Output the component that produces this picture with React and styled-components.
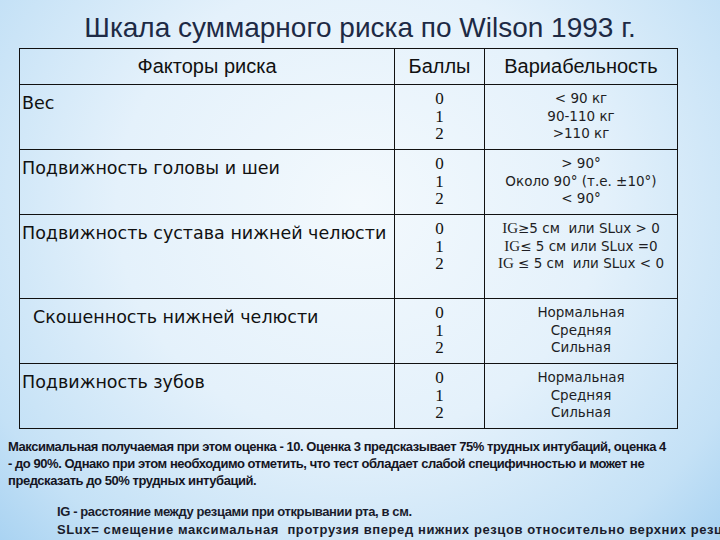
import React from "react";
import styled, { createGlobalStyle } from "styled-components";

const GlobalStyle = createGlobalStyle`
  html, body {
    margin: 0;
    padding: 0;
  }
  body {
    width: 720px;
    height: 540px;
    overflow: hidden;
  }
`;

const Slide = styled.div`
  width: 720px;
  height: 540px;
  overflow: hidden;
  background: radial-gradient(
    ellipse 75% 95% at 50% 38%,
    #f3f9fd 0%,
    #e4f1fb 45%,
    #c4e1f6 78%,
    #9ecdf0 100%
  );
`;

const Title = styled.h1`
  margin: 0;
  padding-top: 13px;
  height: 35px;
  line-height: 30px;
  text-align: center;
  font-family: "Liberation Sans", Arial, sans-serif;
  font-weight: normal;
  font-size: 28px;
  color: #1d2a45;
  white-space: nowrap;
`;

const Table = styled.table`
  margin-left: 19px;
  width: 658px;
  border-collapse: collapse;
  table-layout: fixed;
  color: #111;
`;

const Th = styled.th`
  height: 35px;
  padding: 0;
  border: 1px solid #111;
  font-family: "Liberation Sans", Arial, sans-serif;
  font-weight: normal;
  font-size: 20px;
  text-align: center;
  vertical-align: middle;
`;

const FactorCell = styled.td`
  height: ${(p) => p.$h}px;
  padding: 8px 0 0 ${(p) => (p.$indent ? 13 : 2)}px;
  box-sizing: border-box;
  border: 1px solid #111;
  vertical-align: top;
  font-family: "DejaVu Sans", Verdana, sans-serif;
  font-size: 17.5px;
  line-height: 20px;
  white-space: nowrap;
`;

const ListCell = styled.td`
  padding: 5px 0 0;
  border: 1px solid #111;
  vertical-align: top;
  text-align: center;
  font-family: ${(p) =>
    p.$serif
      ? `"Liberation Serif", "Times New Roman", serif`
      : `"DejaVu Sans", Verdana, sans-serif`};
  font-size: ${(p) => (p.$serif ? 17 : 13.5)}px;
  line-height: 17.5px;
  color: ${(p) => (p.$serif ? "#111" : "#1e1e24")};
  white-space: nowrap;
`;

const Serif = styled.span`
  font-family: "Liberation Serif", "Times New Roman", serif;
  font-size: 15px;
`;

const Note = styled.p`
  margin: 9px 0 0 8px;
  font-family: "Liberation Sans", Arial, sans-serif;
  font-weight: bold;
  font-size: 13px;
  line-height: 17px;
  letter-spacing: -0.45px;
  color: #15151f;
  white-space: nowrap;
`;

const Legend = styled.div`
  margin: 14px 0 0 57px;
`;

const LegendLine = styled.div`
  font-family: "Liberation Sans", Arial, sans-serif;
  font-weight: bold;
  font-size: 13px;
  line-height: 18px;
  letter-spacing: ${(p) => p.$spacing}px;
  color: #1a1c2c;
  white-space: nowrap;
`;

const rows = [
  {
    factor: "Вес",
    h: 65,
    values: ["< 90 кг", "90-110 кг", ">110 кг"],
  },
  {
    factor: "Подвижность головы и шеи",
    h: 65,
    values: ["> 90°", "Около 90° (т.е. ±10°)", "< 90°"],
  },
  {
    factor: "Подвижность сустава нижней челюсти",
    h: 84,
    values: [
      <><Serif>IG</Serif>≥5 см&nbsp;&nbsp;или SLux &gt; 0</>,
      <><Serif>IG</Serif>≤ 5 см или SLux =0</>,
      <><Serif>IG</Serif> ≤ 5 см&nbsp;&nbsp;или SLux &lt; 0</>,
    ],
  },
  {
    factor: "Скошенность нижней челюсти",
    indent: true,
    h: 65,
    values: ["Нормальная", "Средняя", "Сильная"],
  },
  {
    factor: "Подвижность зубов",
    h: 65,
    values: ["Нормальная", "Средняя", "Сильная"],
  },
];

const App = () => {
  return (
    <Slide>
      <GlobalStyle />
      <Title>Шкала суммарного риска по Wilson 1993 г.</Title>
      <Table>
        <colgroup>
          <col style={{ width: 375 }} />
          <col style={{ width: 90 }} />
          <col style={{ width: 193 }} />
        </colgroup>
        <thead>
          <tr>
            <Th>Факторы риска</Th>
            <Th>Баллы</Th>
            <Th>Вариабельность</Th>
          </tr>
        </thead>
        <tbody>
          {rows.map((row, i) => (
            <tr key={i}>
              <FactorCell $h={row.h} $indent={row.indent}>
                {row.factor}
              </FactorCell>
              <ListCell $serif>
                0<br />1<br />2
              </ListCell>
              <ListCell>
                {row.values.map((v, j) => (
                  <div key={j}>{v}</div>
                ))}
              </ListCell>
            </tr>
          ))}
        </tbody>
      </Table>
      <Note>
        Максимальная получаемая при этом оценка - 10. Оценка 3 предсказывает 75% трудных интубаций, оценка 4
        <br />
        - до 90%. Однако при этом необходимо отметить, что тест обладает слабой специфичностью и может не
        <br />
        предсказать до 50% трудных интубаций.
      </Note>
      <Legend>
        <LegendLine $spacing={-0.4}>
          IG - расстояние между резцами при открывании рта, в см.
        </LegendLine>
        <LegendLine $spacing={0.6}>
          SLux= смещение максимальная&nbsp;&nbsp;протрузия вперед нижних резцов относительно верхних резцов
        </LegendLine>
      </Legend>
    </Slide>
  );
};

export default App;
